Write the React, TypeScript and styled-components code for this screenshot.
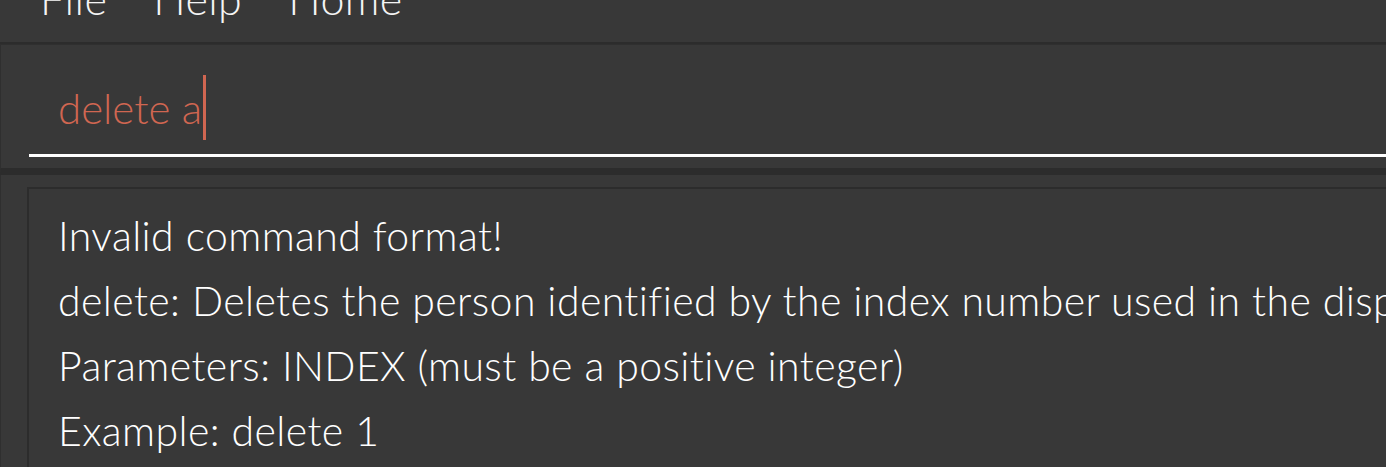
import React from "react";
import styled, { createGlobalStyle } from "styled-components";

const Global = createGlobalStyle`
  html, body {
    margin: 0;
    padding: 0;
    background: #383838;
    overflow: hidden;
  }
  #root {
    width: 1386px;
    height: 467px;
  }
`;

const Window = styled.div`
  width: 1386px;
  height: 467px;
  display: flex;
  flex-direction: column;
  background: #383838;
  overflow: hidden;
  font-family: "Lato", "Open Sans", "Liberation Sans", sans-serif;
  font-weight: 300;
  color: #ffffff;
`;

const MenuBar = styled.nav`
  flex: none;
  height: 42px;
  display: flex;
  align-items: flex-start;
  padding-left: 17px;
  overflow: hidden;
  background: #383838;
  border-bottom: 2px solid #2c2c2c;
`;

const MenuItem = styled.span`
  padding: 0 23px;
  font-size: 43px;
  line-height: 1;
  margin-top: -23px;
  letter-spacing: 0.4px;
  color: #f4f4f4;
  white-space: nowrap;
`;

const CommandPane = styled.section`
  flex: none;
  height: 131px;
  box-sizing: border-box;
  display: flex;
  flex-direction: column;
  justify-content: flex-end;
  padding: 0 0 11px 28px;
  background: #383838;
  border-top: 1px solid #2f2f2f;
  border-left: 1px solid #2f2f2f;
  border-bottom: 7px solid #2c2c2c;
`;

const CommandField = styled.div`
  display: flex;
  align-items: flex-start;
  height: 97px;
  box-sizing: border-box;
  padding-left: 29px;
  border-bottom: 3px solid #ffffff;
`;

const CommandText = styled.span<{ $error?: boolean }>`
  font-size: 42px;
  line-height: 1;
  margin-top: 27px;
  color: ${(p) => (p.$error ? "#d06651" : "#ffffff")};
  white-space: pre;
`;

const Caret = styled.span`
  display: block;
  flex: none;
  width: 3px;
  height: 65px;
  margin-top: 15px;
  margin-left: 1px;
  background: #d06651;
`;

const ResultPane = styled.section`
  flex: 1;
  min-height: 0;
  display: flex;
  padding: 12px 0 0 26px;
  background: #383838;
  border-left: 1px solid #2f2f2f;
  overflow: hidden;
`;

const ResultBox = styled.div`
  flex: none;
  width: 1500px;
  height: 400px;
  box-sizing: border-box;
  padding: 14px 0 0 29px;
  border: 2px solid #2c2c2c;
  background: #383838;
`;

const ResultLine = styled.div`
  font-size: 41px;
  line-height: 65px;
  letter-spacing: 0.4px;
  color: #ffffff;
  white-space: nowrap;
`;

const lines = [
  "Invalid command format!",
  "delete: Deletes the person identified by the index number used in the displayed person list.",
  "Parameters: INDEX (must be a positive integer)",
  "Example: delete 1",
];

export default function App() {
  return (
    <>
      <Global />
      <Window>
        <MenuBar>
          <MenuItem>File</MenuItem>
          <MenuItem>Help</MenuItem>
          <MenuItem>Home</MenuItem>
        </MenuBar>
        <CommandPane>
          <CommandField>
            <CommandText $error>delete a</CommandText>
            <Caret />
          </CommandField>
        </CommandPane>
        <ResultPane>
          <ResultBox>
            {lines.map((l) => (
              <ResultLine key={l}>{l}</ResultLine>
            ))}
          </ResultBox>
        </ResultPane>
      </Window>
    </>
  );
}
